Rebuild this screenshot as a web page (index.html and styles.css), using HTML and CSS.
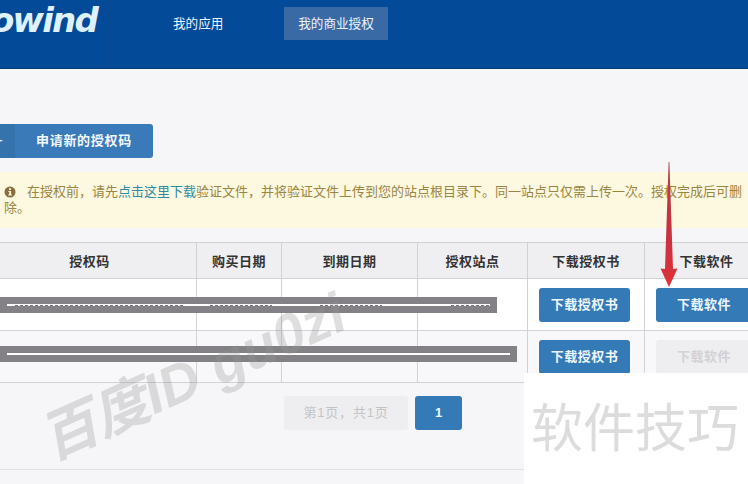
FILE: index.html
```html
<!DOCTYPE html>
<html lang="zh-CN">

<head>
    <meta charset="UTF-8">
    <meta name="viewport" content="width=device-width, initial-scale=1.0">
    <title>我的商业授权</title>
    <link rel="stylesheet" href="styles.css">
</head>

<body>
    <header class="topbar">
        <div class="logo"><span>owind</span></div>
        <nav class="nav">
            <a class="nav-item">我的应用</a>
            <a class="nav-item active">我的商业授权</a>
        </nav>
    </header>

    <main class="content">
        <div class="apply">
            <span class="apply-icon">+</span>
            <span class="apply-text">申请新的授权码</span>
        </div>

        <div class="alert">
            <svg class="alert-icon" viewBox="0 0 12 12" width="12" height="12">
                <circle cx="6" cy="6" r="5.5" fill="#8a6d3b"></circle>
                <rect x="5" y="2.2" width="2" height="1.8" fill="#fcf8e3"></rect>
                <path d="M4.4 5h2.7v3.6h.9v1H4.2v-1h1V6h-.8z" fill="#fcf8e3"></path>
            </svg>在授权前，请先<a class="alert-link">点击这里下载</a>验证文件，并将验证文件上传到您的站点根目录下。同一站点只仅需上传一次。授权完成后可删除。
        </div>

        <table class="grid">
            <colgroup>
                <col class="col-code">
                <col class="col-buy">
                <col class="col-end">
                <col class="col-site">
                <col class="col-cert">
                <col class="col-soft">
            </colgroup>
            <thead>
                <tr>
                    <th>授权码</th>
                    <th>购买日期</th>
                    <th>到期日期</th>
                    <th>授权站点</th>
                    <th>下载授权书</th>
                    <th>下载软件</th>
                </tr>
            </thead>
            <tbody>
                <tr>
                    <td></td>
                    <td></td>
                    <td></td>
                    <td></td>
                    <td><a class="btn btn-cert">下载授权书</a></td>
                    <td><a class="btn btn-soft">下载软件</a></td>
                </tr>
                <tr class="alt">
                    <td></td>
                    <td></td>
                    <td></td>
                    <td></td>
                    <td><a class="btn btn-cert">下载授权书</a></td>
                    <td><a class="btn btn-soft off">下载软件</a></td>
                </tr>
            </tbody>
        </table>

        <div class="pager">
            <span class="page-info">第1页，共1页</span>
            <span class="page-num">1</span>
        </div>
        <div class="foot-line"></div>
    </main>

    <!-- 截图上的标注 -->
    <div class="mask mask-one"><i></i></div>
    <div class="mask mask-two"><i></i></div>

    <svg class="arrow" viewBox="0 0 24 130" width="24" height="130">
        <defs>
            <linearGradient id="shaft" x1="0" y1="0" x2="0" y2="1">
                <stop offset="0" stop-color="#a8454f"></stop>
                <stop offset="0.5" stop-color="#c4333f"></stop>
                <stop offset="1" stop-color="#e0303a"></stop>
            </linearGradient>
        </defs>
        <path d="M11.6 0h.8L16 107l4.5-.5L12 125 3.5 106.5 8 107z" fill="url(#shaft)"></path>
    </svg>

    <div class="stamp">百度ID gu0zi</div>
    <div class="corner">软件技巧</div>
</body>

</html>
```

FILE: styles.css
```css
html,
body {
    height: 484px;
}

body {
    margin: 0;
    position: relative;
    overflow: hidden;
    background: #f6f6f9;
    font-family: "Liberation Sans", "Noto Sans CJK SC", sans-serif;
    font-size: 13px;
    color: #333;
}

/* 顶部导航 */
.topbar {
    display: flex;
    height: 68px;
    background: #034b99;
    border-bottom: 1px solid #0b3a70;
}

.logo {
    width: 110px;
    height: 68px;
    overflow: hidden;
    border-right: 1px solid #0a4a92;
}

.logo span {
    display: block;
    margin: 0 0 0 -9px;
    font-family: "DejaVu Sans", sans-serif;
    font-size: 34px;
    line-height: 41px;
    font-style: italic;
    font-weight: bold;
    letter-spacing: -1.8px;
    color: #dff1fb;
}

.nav {
    display: flex;
    align-items: flex-start;
}

.nav-item {
    height: 33px;
    margin-top: 7px;
    line-height: 34px;
    font-size: 12.6px;
    color: #eef5fb;
}

.nav-item:first-child {
    width: 64px;
    padding-left: 62px;
    border-right: 1px solid #0a4a92;
}

.nav-item.active {
    width: 104px;
    margin-left: 46px;
    text-align: center;
    background: #3a6aa6;
}

.content {
    padding-top: 55px;
}

/* 申请按钮 */
.apply {
    display: flex;
    width: 153px;
    height: 34px;
    border-radius: 0 3px 3px 0;
    overflow: hidden;
    background: #3a7ab8;
    color: #f2f8fc;
    font-weight: bold;
    line-height: 34px;
}

.apply-icon {
    width: 15px;
    background: #3573ad;
    text-indent: -5px;
}

.apply-text {
    padding-left: 21px;
    letter-spacing: .7px;
}

/* 提示 */
.alert {
    box-sizing: border-box;
    width: 748px;
    height: 56px;
    margin-top: 14px;
    padding: 12px 0 0 4px;
    background: #fdf8e0;
    color: #9a8542;
    line-height: 16px;
    word-break: break-all;
}

.alert-icon {
    margin-right: 11px;
    vertical-align: -2px;
}

.alert-link {
    color: #2d8aa5;
}

/* 表格 */
.grid {
    margin: 14px 0 0 -18px;
    border-collapse: collapse;
    table-layout: fixed;
    width: 786px;
}

.col-code {
    width: 214px;
}

.col-buy {
    width: 85px;
}

.col-end {
    width: 136px;
}

.col-site {
    width: 110px;
}

.col-cert {
    width: 117px;
}

.col-soft {
    width: 124px;
}

.grid th,
.grid td {
    border: 1px solid #d2d2d6;
}

.grid th {
    height: 34px;
    padding: 0 0 1px;
    background: #efeff2;
    color: #333;
    font-weight: bold;
    letter-spacing: .45px;
}

.grid td {
    height: 34px;
    padding: 9px 11px 8px;
    background: #fff;
}

.grid .alt td {
    background: #f8f8fa;
}

.btn {
    display: block;
    height: 34px;
    line-height: 33px;
    border-radius: 3px;
    background: #337ab7;
    color: #eef6fb;
    font-weight: bold;
    text-align: center;
    letter-spacing: .45px;
}

.btn-cert {
    width: 91px;
}

.btn-soft {
    width: 96px;
}

.btn.off {
    background: #eeeef0;
    color: #d2d2d6;
}

/* 分页 */
.pager {
    display: flex;
    gap: 7px;
    margin: 13px 0 0 284px;
}

.page-info,
.page-num {
    height: 34px;
    line-height: 34px;
    text-align: center;
    border-radius: 3px;
}

.page-info {
    width: 124px;
    background: #eeeef0;
    color: #c4c4c8;
    letter-spacing: .8px;
}

.page-num {
    width: 47px;
    background: #337ab7;
    color: #eef6fb;
    font-weight: bold;
}

.foot-line {
    margin-top: 39px;
    height: 1px;
    background: #e0e0e4;
}

/* 标注层 */
.mask {
    position: absolute;
    left: 0;
    height: 16px;
    background: #838185;
}

.mask i {
    position: absolute;
    left: 7px;
    right: 7px;
    top: 7px;
    height: 2px;
    background: #fff;
}

/* 没盖住的文字边缘 */
.mask-one i {
    background:
        repeating-linear-gradient(90deg, #77757a 0 3px, transparent 3px 5px) 8px 1px / 170px 1px no-repeat,
        repeating-linear-gradient(90deg, #77757a 0 3px, transparent 3px 5px) 203px 1px / 62px 1px no-repeat,
        repeating-linear-gradient(90deg, #77757a 0 3px, transparent 3px 5px) 313px 1px / 62px 1px no-repeat,
        repeating-linear-gradient(90deg, #77757a 0 3px, transparent 3px 5px) 444px 1px / 39px 1px no-repeat,
        #fff;
}

.mask-one {
    top: 297px;
    width: 497px;
}

.mask-two {
    top: 346px;
    width: 517px;
}

.arrow {
    position: absolute;
    left: 657px;
    top: 162px;
}

.stamp {
    position: absolute;
    left: 44px;
    top: 408px;
    font-size: 56px;
    line-height: 70px;
    font-weight: bold;
    font-style: italic;
    white-space: nowrap;
    color: rgba(150, 150, 150, .3);
    transform: rotate(-24deg);
    transform-origin: left center;
}

.corner {
    position: absolute;
    left: 524px;
    top: 373px;
    width: 224px;
    height: 111px;
    padding: 23px 0 0 7px;
    box-sizing: border-box;
    background: #fff;
    color: #dcdcdc;
    font-size: 52px;
    line-height: 66px;
    white-space: nowrap;
}
```
